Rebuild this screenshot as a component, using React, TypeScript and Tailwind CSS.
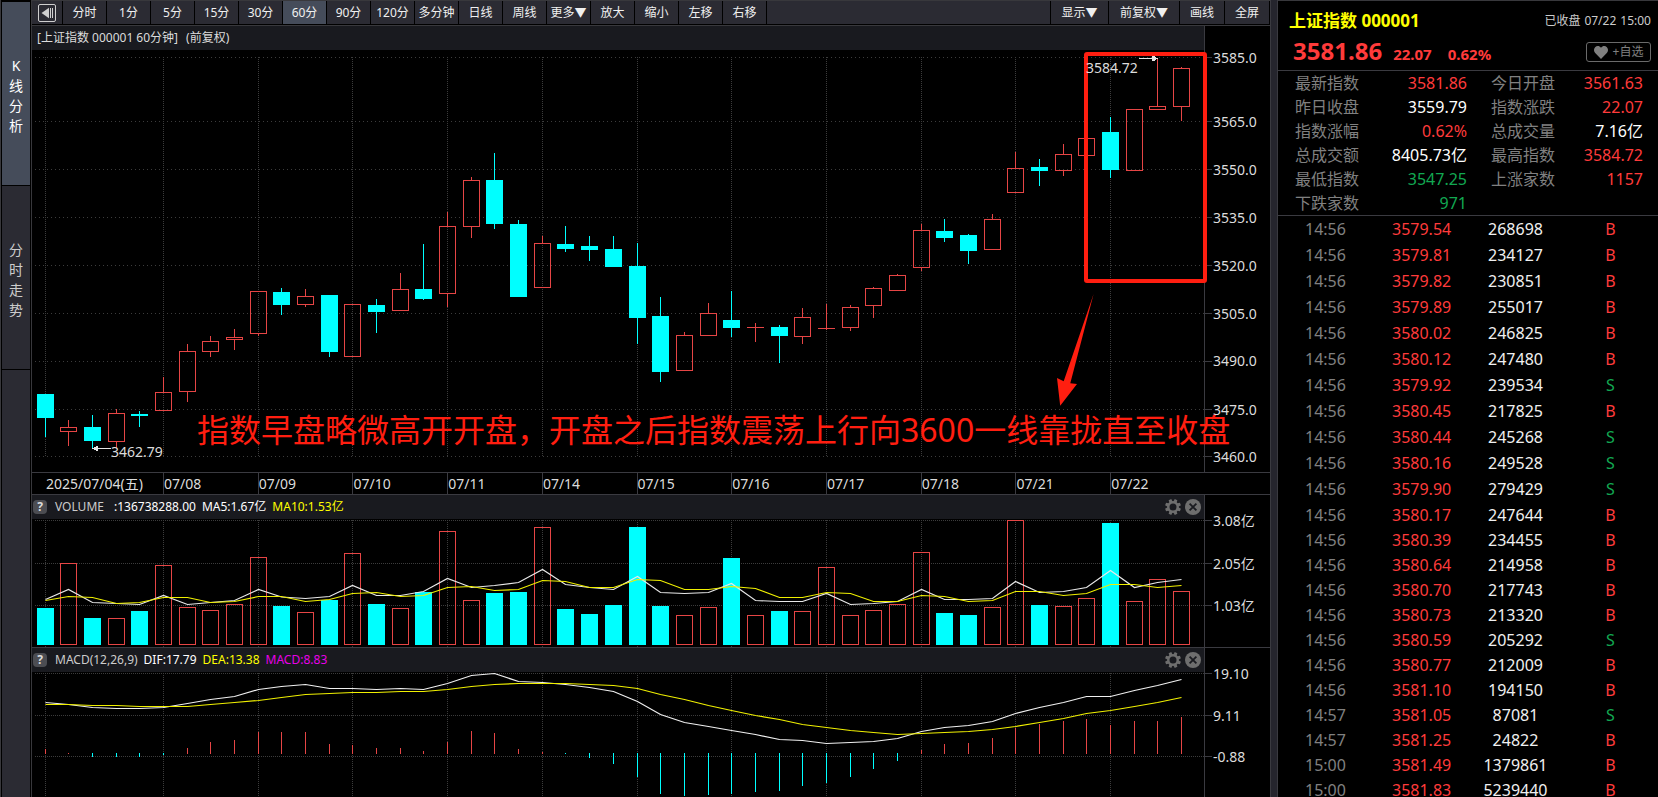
import { ReactNode } from "react";
import clsx from "clsx";

type Quote = { label: string; value: string; tone: "up" | "down" | "flat" };

// [kind, body top, body bottom, high, low]
type Candle = ["r" | "c", number, number, number, number];

const PLOT_X = 32;
const PLOT_W = 1172;
const FIRST_X = 45;
const STEP = 23.6805;
const BODY_W = 17;
const DAY_X = [45, 163, 258, 352, 447, 542, 637, 731, 826, 921, 1015, 1110];

const UP = "#e64545";
const DOWN = "#00ffff";
const MARK = "#ff1e10";

const barX = (i: number) => Math.floor(FIRST_X + i * STEP);

const candles: Candle[] = [
  ["c", 394, 418, 394, 437],
  ["r", 427, 432, 420, 446],
  ["c", 427, 441, 415, 449],
  ["r", 413, 442, 409, 448],
  ["c", 414, 416, 411, 427],
  ["r", 392, 411, 377, 411],
  ["r", 351, 392, 344, 402],
  ["r", 341, 352, 336, 357],
  ["r", 337, 340, 329, 350],
  ["r", 291, 334, 291, 336],
  ["c", 292, 305, 288, 315],
  ["r", 296, 305, 289, 307],
  ["c", 295, 352, 295, 357],
  ["r", 304, 357, 304, 357],
  ["c", 305, 312, 299, 333],
  ["r", 289, 311, 273, 311],
  ["c", 289, 299, 244, 300],
  ["r", 226, 294, 212, 307],
  ["r", 180, 227, 177, 238],
  ["c", 180, 224, 153, 229],
  ["c", 224, 297, 220, 297],
  ["r", 243, 288, 236, 288],
  ["c", 244, 249, 226, 252],
  ["c", 246, 250, 236, 261],
  ["c", 249, 267, 236, 267],
  ["c", 266, 318, 243, 344],
  ["c", 316, 372, 297, 382],
  ["r", 335, 371, 332, 371],
  ["r", 313, 336, 303, 336],
  ["c", 320, 328, 291, 337],
  ["r", 327, 328, 323, 342],
  ["c", 327, 336, 325, 363],
  ["r", 317, 337, 308, 344],
  ["r", 328, 329, 304, 330],
  ["r", 307, 328, 305, 331],
  ["r", 288, 306, 287, 318],
  ["r", 275, 291, 274, 291],
  ["r", 230, 268, 224, 271],
  ["c", 231, 238, 219, 242],
  ["c", 235, 251, 234, 264],
  ["r", 219, 250, 214, 250],
  ["r", 168, 193, 152, 193],
  ["c", 167, 171, 159, 186],
  ["r", 154, 171, 144, 176],
  ["r", 138, 156, 138, 156],
  ["c", 132, 170, 117, 178],
  ["r", 109, 171, 109, 171],
  ["r", 106, 110, 59, 110],
  ["r", 68, 107, 67, 121],
];

const volumeTops = [
  608, 563, 618, 618, 611, 565, 607, 610, 604, 557, 606, 612, 600, 553, 604,
  608, 592, 531, 600, 593, 592, 527, 609, 614, 605, 527, 606, 615, 607, 558,
  615, 611, 611, 567, 615, 610, 604, 552, 613, 615, 607, 520, 605, 606, 598,
  523, 601, 579, 591,
];

const ma5 = [
  599.5, 589.5, 602.5, 603.5, 604.5, 595.5, 604.5, 602.5, 600.5, 589.5, 597,
  598.5, 596.5, 585.5, 595.5, 595.5, 591.5, 578.5, 587.5, 585.5, 582.5, 569.5,
  584.5, 587.5, 589.5, 576.5, 592.5, 593.5, 592.5, 583.5, 600.5, 601.5, 601.5,
  593.5, 604.5, 603.5, 601.5, 589.5, 599.5, 599.5, 598.5, 581.5, 592.5, 591.5,
  587.5, 570.5, 587.5, 582.5, 579.5,
];

const ma10 = [
  600.5, 596.5, 597.5, 603.5, 602.5, 597.5, 597.5, 602.5, 601.5, 596.5, 596.5,
  601.5, 599.5, 593.5, 592.5, 596.5, 595.5, 587.5, 586.5, 590.5, 589.5, 580.5,
  581.5, 587.5, 587.5, 579.5, 580.5, 589.5, 589.5, 586.5, 588.5, 597.5, 597.5,
  592.5, 593.5, 601.5, 601.5, 595.5, 596.5, 601.5, 600.5, 591.5, 591.5, 595.5,
  593.5, 584.5, 584.5, 587.5, 585.5,
];

const dif = [
  702.5, 704.5, 707.5, 708.5, 708.5, 707.5, 703.5, 699.5, 696.5, 689.5, 686.5,
  684.5, 688.5, 688.5, 689.5, 688.5, 689.5, 683.5, 675.5, 673.5, 681.5, 682.5,
  684.5, 687.5, 691.5, 701.5, 714.5, 722.5, 726.5, 730.5, 734.5, 739.5, 740.5,
  743.5, 742.5, 741.5, 738.5, 731.5, 727.5, 725.5, 721.5, 713.5, 707.5, 702.5,
  696.5, 696.5, 690.5, 685.5, 679.5,
];

const dea = [
  704.5, 704.5, 705.5, 705.5, 706.5, 706.5, 706.5, 704.5, 702.5, 700.5, 697.5,
  694.5, 693.5, 692.5, 692.5, 691.5, 691.5, 689.5, 686.5, 684.5, 683.5, 683.5,
  683.5, 684.5, 685.5, 688.5, 694.5, 699.5, 705.5, 710.5, 715.5, 719.5, 724.5,
  727.5, 730.5, 732.5, 734.5, 733.5, 732.5, 731.5, 729.5, 726.5, 722.5, 718.5,
  713.5, 710.5, 706.5, 702.5, 697.5,
];

// far end of each histogram bar, measured around the zero line at 754
const hist = [
  749, 753, 757, 757, 757, 755, 748, 742, 740, 732, 732, 732, 744, 745, 748,
  748, 751, 742, 731, 733, 749, 752, 754, 758, 764, 777, 794, 796, 795, 794,
  792, 791, 786, 783, 777, 769, 761, 750, 744, 743, 738, 728, 724, 721, 719,
  725, 721, 721, 717,
];

const periods = [
  "分时", "1分", "5分", "15分", "30分", "60分", "90分", "120分", "多分钟",
  "日线", "周线", "更多▼", "放大", "缩小", "左移", "右移",
];

const dates = [
  "07/08", "07/09", "07/10", "07/11", "07/14", "07/15", "07/16", "07/17",
  "07/18", "07/21", "07/22",
];

const quotes: Quote[] = [
  { label: "最新指数", value: "3581.86", tone: "up" },
  { label: "今日开盘", value: "3561.63", tone: "up" },
  { label: "昨日收盘", value: "3559.79", tone: "flat" },
  { label: "指数涨跌", value: "22.07", tone: "up" },
  { label: "指数涨幅", value: "0.62%", tone: "up" },
  { label: "总成交量", value: "7.16亿", tone: "flat" },
  { label: "总成交额", value: "8405.73亿", tone: "flat" },
  { label: "最高指数", value: "3584.72", tone: "up" },
  { label: "最低指数", value: "3547.25", tone: "down" },
  { label: "上涨家数", value: "1157", tone: "up" },
  { label: "下跌家数", value: "971", tone: "down" },
];

const ticks: [string, string, string, "B" | "S"][] = [
  ["14:56", "3579.54", "268698", "B"],
  ["14:56", "3579.81", "234127", "B"],
  ["14:56", "3579.82", "230851", "B"],
  ["14:56", "3579.89", "255017", "B"],
  ["14:56", "3580.02", "246825", "B"],
  ["14:56", "3580.12", "247480", "B"],
  ["14:56", "3579.92", "239534", "S"],
  ["14:56", "3580.45", "217825", "B"],
  ["14:56", "3580.44", "245268", "S"],
  ["14:56", "3580.16", "249528", "S"],
  ["14:56", "3579.90", "279429", "S"],
  ["14:56", "3580.17", "247644", "B"],
  ["14:56", "3580.39", "234455", "B"],
  ["14:56", "3580.64", "214958", "B"],
  ["14:56", "3580.70", "217743", "B"],
  ["14:56", "3580.73", "213320", "B"],
  ["14:56", "3580.59", "205292", "S"],
  ["14:56", "3580.77", "212009", "B"],
  ["14:56", "3581.10", "194150", "B"],
  ["14:57", "3581.05", "87081", "S"],
  ["14:57", "3581.25", "24822", "B"],
  ["15:00", "3581.49", "1379861", "B"],
  ["15:00", "3581.83", "5239440", "B"],
];

const toneClass = {
  up: "text-[#ff3b3b]",
  down: "text-[#12a852]",
  flat: "text-white",
};

function Plot({
  top,
  height,
  rows,
  dash,
  children,
}: {
  top: number;
  height: number;
  rows: number[];
  dash: string;
  children: ReactNode;
}) {
  const gridEnd = rows.length > 3 ? rows[rows.length - 1] : top + height;
  return (
    <svg
      className="absolute inset-0 h-full w-full overflow-visible"
      viewBox={`${PLOT_X} ${top} ${PLOT_W} ${height}`}
      preserveAspectRatio="none"
      aria-hidden="true"
    >
      <g stroke="#3c3c3c" shapeRendering="crispEdges">
        {rows.map((y) => (
          <line key={y} x1={35} x2={1204} y1={y + 0.5} y2={y + 0.5} strokeDasharray={dash} />
        ))}
        {DAY_X.map((x) => (
          <line key={x} x1={x + 0.5} x2={x + 0.5} y1={rows[0]} y2={gridEnd} strokeDasharray="1 1" />
        ))}
      </g>
      {children}
    </svg>
  );
}

function Bar({ x, top, bottom, kind }: { x: number; top: number; bottom: number; kind: "r" | "c" }) {
  const left = x - 8;
  if (kind === "c" || bottom - top < 2) {
    return (
      <rect x={left} y={top} width={BODY_W} height={bottom - top} fill={kind === "c" ? DOWN : UP} />
    );
  }
  return (
    <rect
      x={left + 0.5}
      y={top + 0.5}
      width={BODY_W - 1}
      height={bottom - top - 1}
      fill="none"
      stroke={UP}
    />
  );
}

function Curve({ values, color }: { values: number[]; color: string }) {
  return (
    <polyline
      points={values.map((y, i) => `${barX(i) + 0.5},${y}`).join(" ")}
      fill="none"
      stroke={color}
      strokeWidth={1.2}
    />
  );
}

function Axis({ labels, top, height }: { labels: [string, number][]; top: number; height: number }) {
  return (
    <div className="w-[66px] shrink-0 border-l border-[#3a3a40] pt-6">
      <div className="relative h-full">
        {labels.map(([text, y]) => (
          <div
            key={text}
            className="absolute left-0 flex -translate-y-1/2 items-center gap-px text-sm leading-5 text-[#dcdcdc]"
            style={{ top: `${((y - top + 0.5) / height) * 100}%` }}
          >
            <span className="h-px w-[7px] bg-[#3a3a40]" />
            {text}
          </div>
        ))}
      </div>
    </div>
  );
}

function PanelIcons() {
  return (
    <div className="ml-auto flex gap-1 pr-[3px]">
      <button aria-label="设置">
        <svg width="16" height="16" viewBox="0 0 16 16">
          <g fill="#6e6e6e">
            {[0, 45, 90, 135, 180, 225, 270, 315].map((a) => (
              <path key={a} d="M6.2 3.5 6.6 0h2.8l.4 3.5z" transform={`rotate(${a + 22.5} 8 8)`} />
            ))}
          </g>
          <circle cx="8" cy="8" r="4.7" fill="none" stroke="#6e6e6e" strokeWidth="2.4" />
        </svg>
      </button>
      <button aria-label="关闭">
        <svg width="16" height="16" viewBox="0 0 16 16">
          <circle cx="8" cy="8" r="8" fill="#6e6e6e" />
          <path d="m4.6 4.6 6.8 6.8m0-6.8-6.8 6.8" stroke="#1a1b20" strokeWidth="1.8" />
        </svg>
      </button>
    </div>
  );
}

function PanelHeader({ children }: { children: ReactNode }) {
  return (
    <div className="flex h-6 items-center bg-[#191a1f] text-xs">
      <button className="ml-px flex size-[14px] items-center justify-center rounded-sm bg-[#4c4d52] font-bold leading-none text-[#dcdcdc]">
        ?
      </button>
      <div className="ml-2 flex gap-[6px] whitespace-pre">{children}</div>
      <PanelIcons />
    </div>
  );
}

function ToolButton({ label, active, className }: { label: string; active?: boolean; className: string }) {
  return (
    <button
      className={clsx(
        "h-full shrink-0 border-black text-center text-xs whitespace-nowrap text-[#f0f0f0]",
        active ? "bg-[#454c5a]" : "bg-[#2b2b33]",
        className,
      )}
    >
      {label}
    </button>
  );
}

function SideTab({ text, active }: { text: string; active?: boolean }) {
  return (
    <button
      className={clsx(
        "flex h-[184px] flex-col items-center justify-center border-b border-black pt-1 text-sm leading-5",
        active ? "bg-[#454c5a] text-white" : "bg-[#2b2b33] text-[#cccccc]",
      )}
    >
      {text.split("").map((c) => (
        <span key={c}>{c}</span>
      ))}
    </button>
  );
}

function Toolbar() {
  return (
    <div className="flex h-[26px] items-stretch border-t border-b border-[#38383c] bg-[#2b2b33]">
      <div className="flex min-w-0 flex-1 border-b border-black">
        <button
          aria-label="收起"
          className="flex w-[31px] shrink-0 items-center justify-center border-r border-black"
        >
          <svg width="18" height="18" viewBox="0 0 18 18">
            <rect x=".5" y=".5" width="17" height="17" rx="1.5" fill="none" stroke="#cfcfcf" />
            <path d="M3.5 9 11 3.8v10.4z" fill="#cfcfcf" />
            <path d="M12.5 4v10M14.5 4v10" stroke="#cfcfcf" />
          </svg>
        </button>
        {periods.map((p) => (
          <ToolButton key={p} label={p} active={p === "60分"} className="w-11 border-r" />
        ))}
        <div className="ml-auto flex">
          <ToolButton label="显示▼" className="w-[58px] border-l" />
          <ToolButton label="前复权▼" className="w-[71px] border-l" />
          <ToolButton label="画线" className="w-[45px] border-l" />
          <ToolButton label="全屏" className="w-[46px] border-x" />
        </div>
      </div>
    </div>
  );
}

function PricePanel() {
  const at = (x: number, y: number) => ({
    left: `${((x - PLOT_X) / PLOT_W) * 100}%`,
    top: `${((y - 50) / 422) * 100}%`,
  });

  return (
    <section className="flex min-h-0 flex-1">
      <div className="flex min-w-0 flex-1 flex-col">
        <div className="flex h-6 items-center gap-2 bg-[#191a1f] pl-[5px] text-xs whitespace-nowrap text-[#dcdcdc]">
          <span>[上证指数 000001 60分钟]</span>
          <span>(前复权)</span>
        </div>
        <div className="relative z-10 flex-1">
          <Plot
            top={50}
            height={422}
            rows={[57, 121, 169, 217, 265, 313, 361, 409, 456]}
            dash="1 3"
          >
            <g shapeRendering="crispEdges">
              {candles.map(([kind, top, bottom, high, low], i) => {
                const x = barX(i);
                const color = kind === "c" ? DOWN : UP;
                return (
                  <g key={i}>
                    <rect x={x} y={high} width={1} height={Math.max(top - high, 0)} fill={color} />
                    <rect x={x} y={bottom} width={1} height={Math.max(low - bottom, 0)} fill={color} />
                    <Bar x={x} top={top} bottom={bottom} kind={kind} />
                  </g>
                );
              })}
              <g fill="#e6e6e6">
                <rect x={1139} y={58} width={19} height={1} />
                <path d="M1152 56h3v1h1v3h-1v1h-3z" />
                <rect x={92} y={448} width={19} height={1} />
                <path d="M98 446h-2v1h-2v3h2v1h2z" />
              </g>
            </g>
            <rect x={1086} y={54} width={119} height={227} rx={1} fill="none" stroke={MARK} strokeWidth={4} />
            <path
              d="M1093.6 294 1070.3 383.3 1077 384 1060.2 405.8 1057 378 1063.7 381.2z"
              fill={MARK}
            />
          </Plot>
          <span
            className="absolute -translate-y-1/2 text-sm leading-5 text-[#dcdcdc]"
            style={at(1086, 68)}
          >
            3584.72
          </span>
          <span
            className="absolute -translate-y-1/2 text-sm leading-5 text-[#dcdcdc]"
            style={at(111, 452)}
          >
            3462.79
          </span>
          <p
            className="absolute -translate-y-1/2 text-[32px] leading-10 whitespace-nowrap text-[#ff1e10]"
            style={at(197, 430)}
          >
            指数早盘略微高开开盘，开盘之后指数震荡上行向3600一线靠拢直至收盘
          </p>
        </div>
      </div>
      <Axis
        top={50}
        height={422}
        labels={[
          ["3585.0", 57],
          ["3565.0", 121],
          ["3550.0", 169],
          ["3535.0", 217],
          ["3520.0", 265],
          ["3505.0", 313],
          ["3490.0", 361],
          ["3475.0", 409],
          ["3460.0", 456],
        ]}
      />
    </section>
  );
}

function DateRow() {
  return (
    <div className="h-[23px] border-y border-[#3a3a40] pr-[66px] text-sm leading-[21px] text-[#dcdcdc]">
      <div className="flex h-full whitespace-nowrap">
        <div className="shrink-0 pl-[14px]" style={{ width: `${((163 - PLOT_X) / PLOT_W) * 100}%` }}>
          2025/07/04(五)
        </div>
        {dates.map((d) => (
          <div
            key={d}
            className="shrink-0 border-l border-[#3a3a40]"
            style={{ width: `${((STEP * 4) / PLOT_W) * 100}%` }}
          >
            {d}
          </div>
        ))}
      </div>
    </div>
  );
}

function VolumePanel() {
  return (
    <section className="flex h-[153px] border-b border-[#3a3a40]">
      <div className="flex min-w-0 flex-1 flex-col">
        <PanelHeader>
          <span className="mr-1 text-[#cccccc]">VOLUME</span>
          <span className="text-white">:136738288.00</span>
          <span className="text-white">MA5:1.67亿</span>
          <span className="text-[#ffff00]">MA10:1.53亿</span>
        </PanelHeader>
        <div className="relative flex-1">
          <Plot top={519} height={128} rows={[520, 563, 605]} dash="1 1">
            <g shapeRendering="crispEdges">
              {volumeTops.map((top, i) => (
                <Bar key={i} x={barX(i)} top={top} bottom={645} kind={candles[i][0]} />
              ))}
            </g>
            <Curve values={ma5} color="#e8e8e8" />
            <Curve values={ma10} color="#f0f000" />
          </Plot>
        </div>
      </div>
      <Axis top={519} height={128} labels={[["3.08亿", 520], ["2.05亿", 563], ["1.03亿", 605]]} />
    </section>
  );
}

function MacdPanel() {
  return (
    <section className="flex h-[149px]">
      <div className="flex min-w-0 flex-1 flex-col">
        <PanelHeader>
          <span className="text-[#cccccc]">MACD(12,26,9)</span>
          <span className="text-white">DIF:17.79</span>
          <span className="text-[#ffff00]">DEA:13.38</span>
          <span className="text-[#e800e8]">MACD:8.83</span>
        </PanelHeader>
        <div className="relative flex-1">
          <Plot top={672} height={125} rows={[673, 715, 756]} dash="1 1">
            <g shapeRendering="crispEdges">
              {hist.map((end, i) =>
                end < 754 ? (
                  <rect key={i} x={barX(i)} y={end} width={1} height={754 - end} fill={UP} />
                ) : (
                  <rect key={i} x={barX(i)} y={753} width={1} height={end - 753} fill={DOWN} />
                ),
              )}
            </g>
            <Curve values={dif} color="#f0f0f0" />
            <Curve values={dea} color="#f0f000" />
          </Plot>
        </div>
      </div>
      <Axis top={672} height={125} labels={[["19.10", 673], ["9.11", 715], ["-0.88", 756]]} />
    </section>
  );
}

function QuotePanel() {
  return (
    <aside className="flex w-[380px] shrink-0 flex-col overflow-hidden border-t border-[#38383c]">
      <header className="h-[70px] shrink-0 border-b border-[#3a3a40] pr-[7px] pl-[11px]">
        <div className="flex h-10 items-center justify-between">
          <h1 className="text-[17px] font-bold text-[#ffff00]">上证指数 000001</h1>
          <span className="flex gap-1 text-xs text-[#cccccc]">
            <span>已收盘</span>
            <span>07/22</span>
            <span>15:00</span>
          </span>
        </div>
        <div className="flex h-[22px] items-center">
          <div className="flex items-baseline pl-1 font-bold text-[#ff3b3b]">
            <span className="text-2xl leading-6">3581.86</span>
            <span className="ml-[11px] text-[15px]">22.07</span>
            <span className="ml-4 text-[15px]">0.62%</span>
          </div>
          <button className="ml-auto flex h-5 w-[65px] items-center justify-center gap-[5px] rounded-[3px] border border-[#6a6a6a] text-xs whitespace-nowrap text-[#808080]">
            <svg width="14" height="13" viewBox="0 0 14 13">
              <path
                d="M7 13 1.2 7.1C-.4 5.4-.4 2.7 1.1 1.2 2.7-.3 5.3-.4 7 1.7 8.700-.4 11.300-.3 12.900 1.200c1.500 1.500 1.500 4.200-.1 5.900z"
                fill="#808080"
              />
            </svg>
            +自选
          </button>
        </div>
      </header>
      <dl className="grid shrink-0 grid-cols-[172fr_152fr] gap-x-6 border-b border-[#3a3a40] pr-[15px] pl-[17px] leading-6">
        {quotes.map((q) => (
          <div key={q.label} className="flex justify-between">
            <dt className="text-[#808080]">{q.label}</dt>
            <dd className={toneClass[q.tone]}>{q.value}</dd>
          </div>
        ))}
      </dl>
      <table className="w-full table-fixed leading-6">
        <tbody>
          {ticks.map(([time, price, volume, side], i) => (
            <tr key={i} className={i < 11 ? "h-[26px]" : "h-[25px]"}>
              <td className="w-[30%] p-0 pl-[27px] text-[#808080]">{time}</td>
              <td className="w-1/5 p-0 text-[#ff3b3b]">{price}</td>
              <td className="w-1/4 p-0 text-center text-[#f0f0f0]">{volume}</td>
              <td
                className={clsx(
                  "w-1/4 p-0 text-center",
                  side === "B" ? "text-[#ff3b3b]" : "text-[#12a852]",
                )}
              >
                {side}
              </td>
            </tr>
          ))}
        </tbody>
      </table>
    </aside>
  );
}

export default function App() {
  return (
    <div className="flex h-screen overflow-hidden bg-black font-['Noto_Sans','Noto_Sans_CJK_SC',sans-serif] text-base">
      <nav className="flex w-8 shrink-0 flex-col border-x border-[#38383c] bg-black pt-[2px] pr-px pl-px">
        <SideTab text="K线分析" active />
        <SideTab text="分时走势" />
        <div className="flex-1 bg-[#2b2b33]" />
      </nav>
      <main className="flex min-w-0 flex-1 flex-col">
        <Toolbar />
        <PricePanel />
        <DateRow />
        <VolumePanel />
        <MacdPanel />
      </main>
      <div className="w-2 shrink-0 border-x border-[#3a3a40] bg-[#25252d]" />
      <QuotePanel />
    </div>
  );
}
